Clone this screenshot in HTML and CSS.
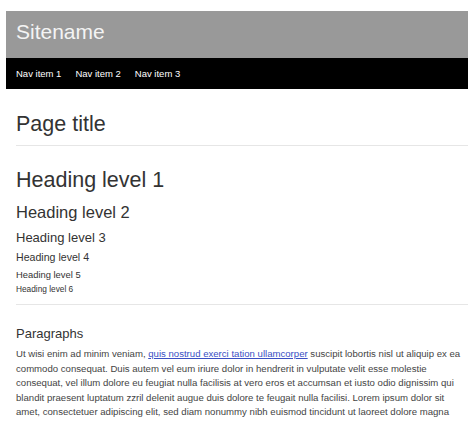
FILE: index.html
```html
<!DOCTYPE html>
<html>
<head>
<meta charset="utf-8">
<link rel="stylesheet" href="styles.css">
</head>
<body>
<div class="page">
  <header class="site-header">
    <div class="sitename">Sitename</div>
  </header>
  <nav class="site-nav">
    <a class="nav-item">Nav item 1</a>
    <a class="nav-item">Nav item 2</a>
    <a class="nav-item">Nav item 3</a>
  </nav>
  <main class="content">
    <h1 class="page-title">Page title</h1>
    <section class="headings">
      <h1 class="h1">Heading level 1</h1>
      <h2 class="h2">Heading level 2</h2>
      <h3 class="h3">Heading level 3</h3>
      <h4 class="h4">Heading level 4</h4>
      <h5 class="h5">Heading level 5</h5>
      <h6 class="h6">Heading level 6</h6>
    </section>
    <section class="paragraphs">
      <h3 class="h3 para-title">Paragraphs</h3>
      <p class="text">Ut wisi enim ad minim veniam, <a class="link" href="#">quis nostrud exerci tation ullamcorper</a> suscipit lobortis nisl ut aliquip ex ea commodo consequat. Duis autem vel eum iriure dolor in hendrerit in vulputate velit esse molestie consequat, vel illum dolore eu feugiat nulla facilisis at vero eros et accumsan et iusto odio dignissim qui blandit praesent luptatum zzril delenit augue duis dolore te feugait nulla facilisi. Lorem ipsum dolor sit amet, consectetuer adipiscing elit, sed diam nonummy nibh euismod tincidunt ut laoreet dolore magna</p>
    </section>
  </main>
</div>
</body>
</html>
```
FILE: styles.css
```css
html, body {
  margin: 0;
  padding: 0;
  background: #fff;
}
body {
  font-family: "Liberation Sans", Arial, sans-serif;
  color: #333;
  overflow: hidden;
}
.page {
  margin: 11px 6px 0 6px;
}
.site-header {
  background: #999;
  height: 47px;
  box-sizing: border-box;
  padding: 9px 10px 0 10px;
}
.sitename {
  font-size: 21px;
  line-height: 24px;
  color: #f4f4f4;
}
.site-nav {
  background: #000;
  height: 31px;
  box-sizing: border-box;
  padding: 1px 10px 0 10px;
  display: flex;
  gap: 14px;
}
.nav-item {
  color: #fff;
  font-size: 9.5px;
  line-height: 30px;
}
.content {
  padding-left: 10px;
}
.page-title {
  margin: 22px 0 0 0;
  padding-bottom: 8px;
  font-size: 21.5px;
  line-height: 26px;
  font-weight: normal;
  color: #333;
  border-bottom: 1px solid #e6e6e6;
}
.headings {
  padding-top: 21px;
  padding-bottom: 10px;
  border-bottom: 1px solid #e6e6e6;
}
.headings h1, .headings h2, .headings h3, .headings h4, .headings h5, .headings h6, .para-title {
  font-weight: normal;
  color: #333;
  margin: 0;
}
.h1 {
  font-size: 21.5px;
  line-height: 26px;
}
.headings .h2 {
  font-size: 16.5px;
  line-height: 20px;
  margin-top: 9px;
}
.headings .h3 {
  font-size: 13px;
  line-height: 16px;
  margin-top: 8px;
}
.headings .h4 {
  font-size: 10.6px;
  line-height: 13px;
  margin-top: 5px;
}
.headings .h5 {
  font-size: 9.4px;
  line-height: 11px;
  margin-top: 4.5px;
}
.headings .h6 {
  font-size: 8.3px;
  line-height: 10px;
  margin-top: 4px;
}
.paragraphs {
  padding-top: 21px;
}
.para-title {
  font-size: 13px;
  line-height: 16px;
}
.text {
  margin: 5.5px 0 0 0;
  font-size: 9.6px;
  line-height: 14.5px;
  color: #444;
}
.link {
  color: #3a4fc4;
  text-decoration: underline;
}
```
